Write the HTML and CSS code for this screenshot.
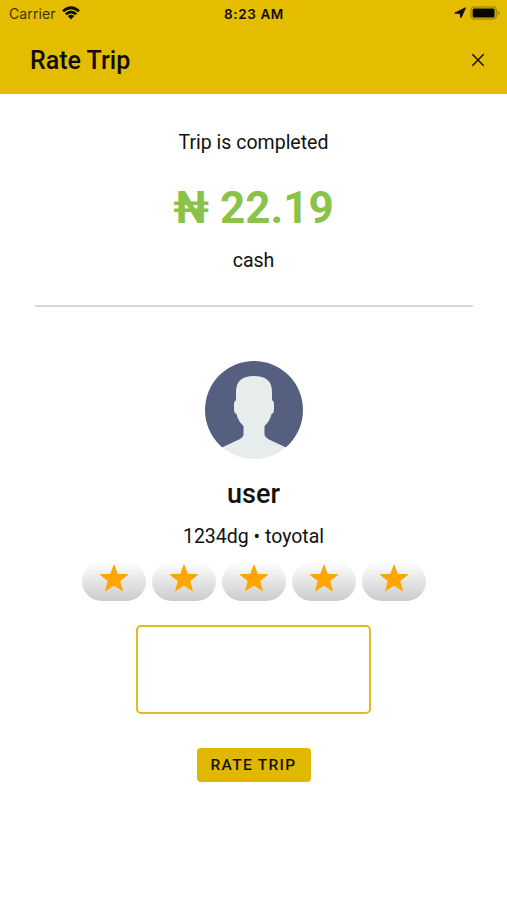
FILE: index.html
```html
<!DOCTYPE html>
<html lang="en">
<head>
<meta charset="utf-8">
<title>Rate Trip</title>
<link rel="stylesheet" href="styles.css">
</head>
<body>
<header class="header">
  <div class="status">
    <div class="carrier"><span>Carrier</span>
      <svg class="wifi" viewBox="0 0 18 14" fill="none" stroke="#100d00" stroke-width="2.7"><path d="M1 5.2Q9-1.7 17 5.2M3.8 8.2Q9 3.8 14.2 8.2"/><path d="M5.8 10Q9 7.3 12.2 10L9 13.4Z" fill="#100d00" stroke="none"/></svg>
    </div>
    <div class="clock">8:23 AM</div>
    <div class="power">
      <svg class="location" viewBox="0 0 12 12"><path d="M11.5.8 7 10.8 6.1 6.5.8 6.1Z" fill="#100d00" stroke="#100d00" stroke-width="1" stroke-linejoin="round"/></svg>
      <svg class="battery" viewBox="0 0 30 14"><rect x="1" y="1" width="25.400" height="12" rx="3.500" fill="none" stroke="#a88c08" stroke-width="1.600"/><rect x="2.600" y="2.600" width="22" height="8.800" rx="1.500" fill="#080600"/><path d="M27.600 4.800Q29.700 5.500 29.700 7T27.600 9.200Z" fill="#a88c08"/></svg>
    </div>
  </div>
  <div class="toolbar">
    <h1>Rate Trip</h1>
    <svg class="close" viewBox="0 0 14 14"><path d="M1.300 1.300 12.700 12.700M12.700 1.300 1.300 12.700" stroke="#161200" stroke-width="1.500"/></svg>
  </div>
</header>
<main>
  <section class="fare">
    <p class="body-text completed">Trip is completed</p>
    <p class="price">₦ 22.19</p>
    <p class="body-text cash">cash</p>
  </section>
  <section class="driver">
    <svg class="avatar" viewBox="0 0 98 98"><defs><clipPath id="round"><circle cx="49" cy="49" r="49"/></clipPath></defs><g clip-path="url(#round)"><path fill="#556080" d="M0 0h98v84H0z"/><path fill="#e7eced" d="M31 31C31 20 37 15 49 15S67 20 67 31V39Q69 40 69 43V49Q69 52 66.500 53Q65 60 59.500 65V74Q60 76 63 78L81 86.500V98H17V86.500L35 78Q38 76 38.500 74V65Q33 60 31.500 53Q29 52 29 49V43Q29 40 31 39Z"/><path fill="#556080" d="M0 84H22.300L17 86.500V88H0ZM98 84H75.700L81 86.500V88H98Z"/></g></svg>
    <h2>user</h2>
    <p class="body-text vehicle">1234dg • toyotal</p>
  </section>
  <div class="stars">
    <button class="star" aria-label="1"><svg viewBox="0 0 30 28"><path d="M15 1.200 18.400 10.300 28.700 10.700 20.700 17 23.400 26.600 15 21.200 6.600 26.600 9.300 17 1.300 10.700 11.600 10.300Z"/></svg></button>
    <button class="star" aria-label="2"><svg viewBox="0 0 30 28"><path d="M15 1.200 18.400 10.300 28.700 10.700 20.700 17 23.400 26.600 15 21.200 6.600 26.600 9.300 17 1.300 10.700 11.600 10.300Z"/></svg></button>
    <button class="star" aria-label="3"><svg viewBox="0 0 30 28"><path d="M15 1.200 18.400 10.300 28.700 10.700 20.700 17 23.400 26.600 15 21.200 6.600 26.600 9.300 17 1.300 10.700 11.600 10.300Z"/></svg></button>
    <button class="star" aria-label="4"><svg viewBox="0 0 30 28"><path d="M15 1.200 18.400 10.300 28.700 10.700 20.700 17 23.400 26.600 15 21.200 6.600 26.600 9.300 17 1.300 10.700 11.600 10.300Z"/></svg></button>
    <button class="star" aria-label="5"><svg viewBox="0 0 30 28"><path d="M15 1.200 18.400 10.300 28.700 10.700 20.700 17 23.400 26.600 15 21.200 6.600 26.600 9.300 17 1.300 10.700 11.600 10.300Z"/></svg></button>
  </div>
  <textarea class="comment" aria-label="Comment"></textarea>
  <button class="submit">RATE TRIP</button>
</main>
</body>
</html>
```
FILE: styles.css
```css
* { box-sizing: border-box; }
body { margin: 0; background: #fff; color: #111; font-family: Roboto, sans-serif; }
h1, h2, p { margin: 0; }
svg { display: block; flex: none; }
button { border: 0; padding: 0; font-family: inherit; }
.header { height: 94px; background: #e4bc00; color: #100d00; }
.status { display: grid; grid-template-columns: 1fr auto 1fr; height: 28px; padding: 0 7px 0 9px; align-items: center; font-family: Inter, sans-serif; font-size: 14px; line-height: 28px; }
.carrier { display: flex; align-items: center; gap: 6px; letter-spacing: 0.1px; color: #3c3202; }
.wifi { width: 18px; height: 14px; margin-bottom: 2px; }
.clock { margin-right: 1px; font-size: 13.500px; font-weight: 600; letter-spacing: 0.600px; }
.power { display: flex; justify-content: flex-end; align-items: center; gap: 4px; height: 26px; margin-bottom: 2px; }
.location { width: 12px; height: 12px; }
.battery { width: 30px; height: 14px; }
.toolbar { display: flex; height: 64px; padding: 0 22px 0 30px; align-items: center; justify-content: space-between; }
h1 { padding-top: 2px; font-size: 25px; font-weight: 500; line-height: 32px; }
.close { width: 14px; height: 14px; }
main { display: flex; flex-direction: column; align-items: center; }
.fare { width: 438px; height: 213px; padding-top: 37px; border-bottom: 2px solid #d8d8d8; text-align: center; }
.body-text { font-size: 19.500px; line-height: 24px; }
.price { margin-top: 25px; color: #8bc34a; font-size: 44px; font-weight: 700; line-height: 56px; }
.cash { margin-top: 13px; }
.driver { display: flex; flex-direction: column; align-items: center; padding-top: 54px; }
.avatar { width: 98px; height: 98px; margin-left: 1px; }
h2 { margin-top: 19px; font-size: 27px; font-weight: 500; line-height: 32px; }
.vehicle { margin-top: 15px; }
.stars { display: flex; gap: 5.500px; margin: 13px 0 0 1px; }
.star { display: flex; width: 64.500px; height: 39px; padding-top: 2px; justify-content: center; align-items: flex-start; border-radius: 20px; background: linear-gradient(#fff, #cbcbcb); }
.star svg { width: 30px; height: 28px; margin-right: 1px; fill: #ffa500; stroke: #ffa500; stroke-width: 1; stroke-linejoin: round; }
.comment { width: 235px; height: 89px; margin-top: 24px; border: 2px solid #dfbc20; border-radius: 5px; background: #fff; resize: none; }
.submit { width: 114px; height: 34px; margin-top: 34px; border-radius: 4px; background: #e0b800; color: #161200; font-size: 15.500px; font-weight: 500; line-height: 34px; letter-spacing: 1.300px; }
```
